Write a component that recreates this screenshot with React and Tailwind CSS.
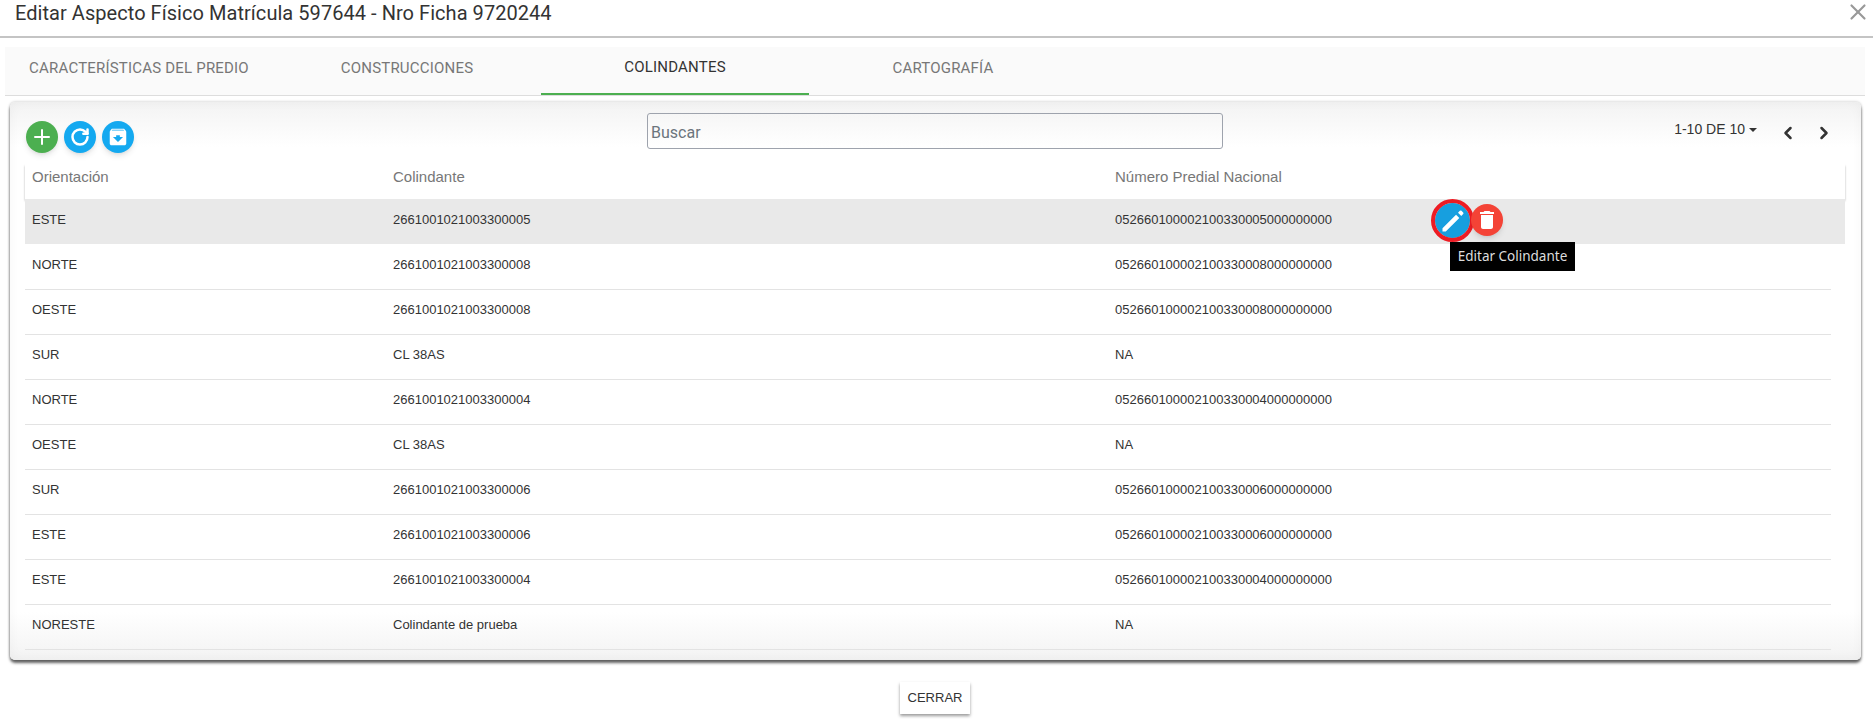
import React from 'react';
import { Plus, RotateCw, X, ChevronLeft, ChevronRight } from 'lucide-react';

const rows = [
    ['ESTE', '2661001021003300005', '052660100002100330005000000000'],
    ['NORTE', '2661001021003300008', '052660100002100330008000000000'],
    ['OESTE', '2661001021003300008', '052660100002100330008000000000'],
    ['SUR', 'CL 38AS', 'NA'],
    ['NORTE', '2661001021003300004', '052660100002100330004000000000'],
    ['OESTE', 'CL 38AS', 'NA'],
    ['SUR', '2661001021003300006', '052660100002100330006000000000'],
    ['ESTE', '2661001021003300006', '052660100002100330006000000000'],
    ['ESTE', '2661001021003300004', '052660100002100330004000000000'],
    ['NORESTE', 'Colindante de prueba', 'NA'],
];

const tabs = ['Características del predio', 'Construcciones', 'Colindantes', 'Cartografía'];

export default function App() {
    return (
        <div className="w-[1873px] h-[719px] overflow-hidden bg-white font-['Roboto',sans-serif]">
            {/* Header */}
            <div className="h-[38px] flex justify-between pl-[15px] pr-[2px] border-b-2 border-[#c4c4c4]">
                <h2 className="text-[20px] leading-[26px] tracking-[0.05px] text-[#333]">Editar Aspecto Físico Matrícula 597644 - Nro Ficha 9720244</h2>
                <X className="w-[26px] h-[26px] mt-[-1px] text-[#999]" />
            </div>

            {/* Tabs */}
            <div className="mt-[9px] ml-[5px] mr-[8px] h-[49px] flex bg-[#fafafa] border-b border-[#ddd]">
                {tabs.map((tab, i) => (
                    <div key={tab} className={`w-[268px] flex items-center justify-center uppercase text-[15px] tracking-[0.2px] pb-[6px] ${i === 2 ? 'text-[#333] border-b-[2px] border-[#4caf50]' : 'text-[#777]'}`}>
                        {tab}
                    </div>
                ))}
            </div>

            {/* Card */}
            <div className="mt-[6px] ml-[10px] mr-[12px] h-[558px] rounded-[5px] pl-[15px] pr-[16px] bg-[linear-gradient(#f3f3f3,#fff_45px,#fff_510px,#f3f3f3)] shadow-[0_3px_3px_rgba(0,0,0,0.6),0_0_3px_rgba(0,0,0,0.25),inset_0_0_12px_rgba(0,0,0,0.04)]">
                <div className="h-[62px] flex items-center relative">
                    <div className="flex gap-[6px] ml-[1px] mt-[8px]">
                        <span className="w-[32px] h-[32px] rounded-full bg-[#4caf50] shadow-md flex items-center justify-center"><Plus className="w-[24px] h-[24px] text-white" /></span>
                        <span className="w-[32px] h-[32px] rounded-full bg-[#14a9f0] shadow-md flex items-center justify-center"><RotateCw className="w-[20px] h-[20px] text-white" strokeWidth={3} /></span>
                        <span className="w-[32px] h-[32px] rounded-full bg-[#14a9f0] shadow-md flex items-center justify-center">
                            <svg viewBox="0 0 24 24" className="w-[22px] h-[22px]" fill="#fff"><path d="M20.5 5.2 19.1 3.5C18.8 3.2 18.4 3 18 3H6c-.5 0-.9.2-1.2.5L3.5 5.2c-.3.4-.5.8-.5 1.3V19c0 1.1.9 2 2 2h14c1.1 0 2-.9 2-2V6.5c0-.5-.2-.9-.5-1.3zM12 17.5 6.5 12H10v-2h4v2h3.5L12 17.5zM5.1 5l.8-1h12l.9 1H5.1z" /></svg>
                        </span>
                    </div>
                    <div className="ml-[513px] mt-[-4px] w-[576px] h-[36px] border border-[#9ea3ad] rounded-[3px] pl-[3px] pt-[3px] flex items-center text-[16px] text-[#6c757d]">Buscar</div>
                    <div className="ml-auto mr-[11px] flex items-center mt-[-7px] text-[14px] text-[#333] font-['Liberation_Sans',sans-serif]">
                        <span>1-10 DE 10</span>
                        <span className="ml-[4px] border-x-[4px] border-x-transparent border-t-[4px] border-t-[#333]" />
                        <ChevronLeft className="ml-[21px] mt-[6px] w-[20px] h-[20px] text-[#333]" strokeWidth={3} />
                        <ChevronRight className="ml-[16px] mt-[6px] w-[20px] h-[20px] text-[#333]" strokeWidth={3} />
                    </div>
                </div>

                {/* Table */}
                <div className="grid grid-cols-[361px_722px_1fr] h-[35px] items-center bg-white pl-[7px] pb-[8px] text-[15px] text-[#777] font-['Liberation_Sans',sans-serif] shadow-[0_2px_2px_rgba(0,0,0,0.3)] relative">
                    <span>Orientación</span>
                    <span>Colindante</span>
                    <span>Número Predial Nacional</span>
                </div>
                {rows.map((r, i) => (
                    <div key={i} className={`relative grid grid-cols-[361px_722px_1fr] items-center pl-[7px] text-[13px] text-[#333] font-['Liberation_Sans',sans-serif] ${i === 0 ? 'h-[45px] pb-[3px] bg-[#e9e9e9]' : i === 1 ? 'h-[46px] pb-[3px] mr-[14px] border-b border-[#e3e3e3]' : 'h-[45px] pb-[5px] mr-[14px] border-b border-[#e3e3e3]'}`}>
                        <span>{r[0]}</span>
                        <span>{r[1]}</span>
                        <span>{r[2]}</span>
                        {i === 0 && (
                            <>
                                <span className="absolute left-[1410px] top-[4px] w-[35px] h-[35px] rounded-full bg-[#179fdf] outline-[4px] outline-[#ed1c24] flex items-center justify-center">
                                    <svg viewBox="0 0 24 24" className="w-[28px] h-[28px]" fill="#fff"><path d="M3 21v-2.8L14.6 6.6l2.8 2.8L5.8 21H3zM20.7 6.1a1 1 0 0 0 0-1.4l-1.4-1.4a1 1 0 0 0-1.4 0l-1.6 1.6 2.8 2.8 1.6-1.6z" /></svg>
                                </span>
                                <span className="absolute left-[1446px] top-[5px] w-[32px] h-[32px] rounded-full bg-[#f44336] shadow-md flex items-center justify-center">
                                    <svg viewBox="0 0 24 24" className="w-[24px] h-[24px]" fill="#fff"><path d="M6 19c0 1.1.9 2 2 2h8c1.1 0 2-.9 2-2V7H6v12zM19 4h-3.5l-1-1h-5l-1 1H5v2h14V4z" /></svg>
                                </span>
                                <span className="absolute z-10 left-[1425px] top-[43px] w-[125px] h-[29px] bg-black text-[#ddd] text-[13.5px] flex items-center justify-center font-['Noto_Sans',sans-serif]">Editar Colindante</span>
                            </>
                        )}
                    </div>
                ))}
            </div>

            <div className="mt-[22px] flex justify-center pr-[3px]">
                <button className="w-[70px] h-[32px] bg-white text-[13px] text-[#333] uppercase shadow-[0_2px_3px_rgba(0,0,0,0.4)] font-['Liberation_Sans',sans-serif]">Cerrar</button>
            </div>
        </div>
    );
}
